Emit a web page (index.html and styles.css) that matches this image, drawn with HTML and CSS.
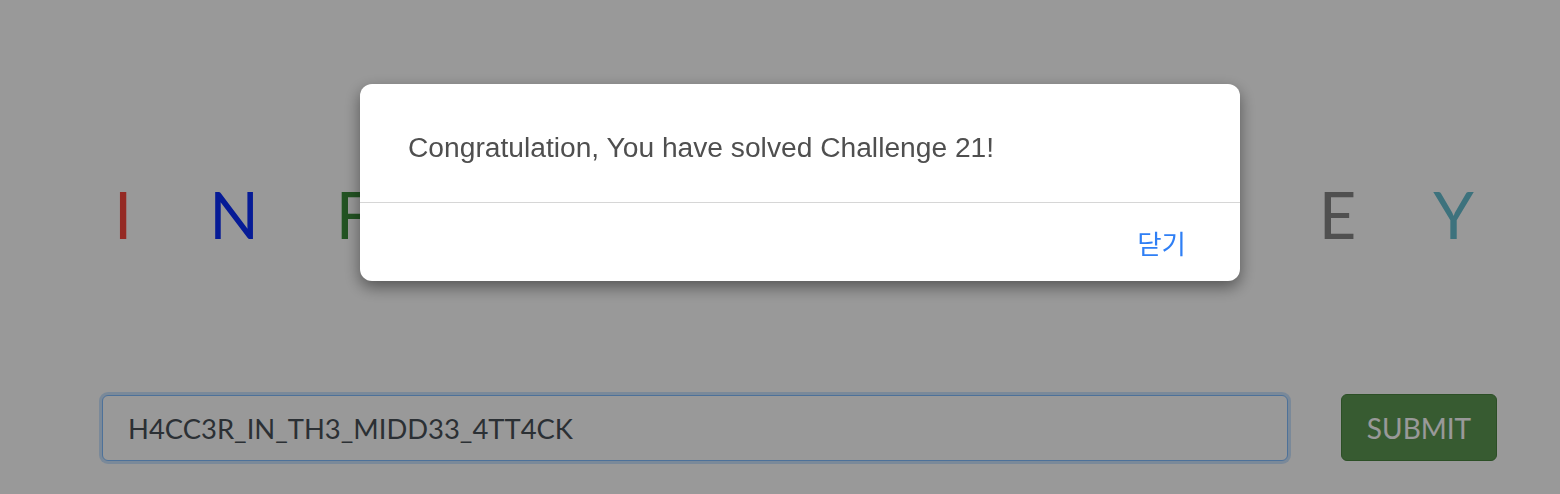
FILE: index.html
```html
<!DOCTYPE html>
<html lang="ko">
<head>
<meta charset="utf-8">
<title>Challenge 21</title>
<link rel="stylesheet" href="styles.css">
</head>
<body>
<main class="page">
  <h1 class="title">
    <span class="c-red">I</span><span class="c-blue">N</span><span class="c-green">F</span><span class="c-orange">O</span><span class="c-red">S</span><span class="c-blue">E</span><span class="c-green">C</span><span class="c-orange">M</span><span class="c-red">O</span><span class="c-blue">N</span><span class="c-gray">E</span><span class="c-teal">Y</span>
  </h1>
  <form class="flag-form">
    <input class="flag-input" type="text" value="H4CC3R_IN_TH3_MIDD33_4TT4CK">
    <button class="submit-btn" type="button">SUBMIT</button>
  </form>
</main>
<div class="overlay">
  <div class="dialog">
    <div class="dialog-body">Congratulation, You have solved Challenge 21!</div>
    <div class="dialog-footer"><button class="dialog-close" type="button">닫기</button></div>
  </div>
</div>
</body>
</html>
```
FILE: styles.css
```css
html, body {
  margin: 0;
  padding: 0;
  background: #ffffff;
}
body {
  width: 1560px;
  height: 494px;
  overflow: hidden;
  font-family: Lato, "Open Sans", sans-serif;
}
.page {
  display: flex;
  flex-direction: column;
}
.title {
  margin: 182px 0 0 0;
  padding: 0 86px 0 114px;
  display: flex;
  justify-content: space-between;
  font-size: 65px;
  line-height: 64px;
  font-weight: 400;
}
.c-red { color: #f8463c; }
.c-blue { color: #0a2dfa; }
.c-green { color: #3a8a3a; }
.c-orange { color: #f0a030; }
.c-gray { color: #858585; }
.c-teal { color: #66bfd0; }

.flag-form {
  margin: 149px 0 0 0;
  padding: 0 63px 0 102px;
  display: flex;
  gap: 53px;
}
.flag-input {
  flex: 1;
  height: 66px;
  box-sizing: border-box;
  border: 1px solid #80bdff;
  border-radius: 6px;
  box-shadow: 0 0 0 3px rgba(0, 123, 255, 0.2);
  padding: 0 25px;
  font-family: Lato, sans-serif;
  font-size: 27.4px;
  color: #495057;
  background: #fff;
  outline: none;
}
.submit-btn {
  width: 156px;
  height: 67px;
  box-sizing: border-box;
  border: 1px solid #4a8440;
  border-radius: 6px;
  background: #5c9853;
  color: #ffffff;
  font-family: Lato, sans-serif;
  font-size: 28px;
  margin-top: -1px;
}

.overlay {
  position: fixed;
  inset: 0;
  background: rgba(0, 0, 0, 0.4);
}
.dialog {
  margin: 84px 0 0 360px;
  width: 880px;
  background: #ffffff;
  border-radius: 12px;
  box-shadow: 0 6px 16px rgba(0, 0, 0, 0.45);
  font-family: "Liberation Sans", Arial, "Noto Sans CJK KR", sans-serif;
}
.dialog-body {
  height: 119px;
  box-sizing: border-box;
  padding: 8px 48px 0 48px;
  display: flex;
  align-items: center;
  font-size: 28.2px;
  color: #4f4f4f;
  border-bottom: 1px solid #d6d6d6;
}
.dialog-footer {
  height: 78px;
  display: flex;
  justify-content: flex-end;
  align-items: center;
  padding: 0 54px 0 0;
}
.dialog-close {
  border: none;
  background: none;
  padding: 0;
  font-family: "Noto Sans CJK KR", sans-serif;
  font-size: 26.5px;
  color: #2f7ff5;
}
```
